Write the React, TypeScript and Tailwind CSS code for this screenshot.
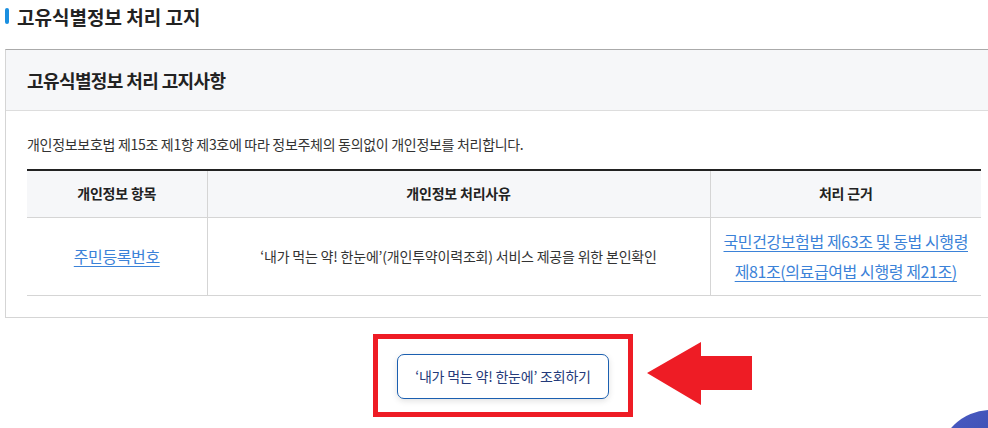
export default function App() {
  return (
    <div className="relative w-[988px] h-[428px] overflow-hidden bg-white font-['Noto_Sans_CJK_KR','Noto_Sans',sans-serif] text-[#222]">
      {/* Title */}
      <div className="flex items-center h-[32px] pl-[5px]">
        <span className="w-[4px] h-[16px] rounded-full bg-[#1a8fe0]" />
        <h2 className="ml-[8px] text-[19px] font-bold leading-none">고유식별정보 처리 고지</h2>
      </div>

      {/* Notice box */}
      <div className="mt-[17px] ml-[5px] w-[1000px] border border-[#d5d5d5] border-t-[#aaaaaa]">
        <div className="flex items-center h-[61px] bg-[#f6f7f9] border-b border-[#dddddd] pl-[21px]">
          <h3 className="text-[18px] font-bold tracking-[-0.6px]">고유식별정보 처리 고지사항</h3>
        </div>
        <div className="pl-[21px] pt-[23px] pb-[21px]">
          <p className="text-[14px] text-[#333] tracking-[-0.3px] leading-[20px]">
            개인정보보호법 제15조 제1항 제3호에 따라 정보주체의 동의없이 개인정보를 처리합니다.
          </p>
          <table className="mt-[15px] w-[954px] border-collapse border-t-2 border-t-[#222] text-center">
            <thead>
              <tr className="h-[47px] bg-[#f6f7f9] border-b border-[#d5d5d5]">
                <th className="w-[180px] text-[14px] font-bold tracking-[-0.2px]">개인정보 항목</th>
                <th className="w-[503px] border-l border-[#d5d5d5] text-[14px] font-bold tracking-[-0.2px]">개인정보 처리사유</th>
                <th className="border-l border-[#d5d5d5] text-[14px] font-bold tracking-[-0.2px]">처리 근거</th>
              </tr>
            </thead>
            <tbody>
              <tr className="h-[78px] border-b border-[#d5d5d5]">
                <td>
                  <a className="text-[16px] text-[#3b82d8] underline underline-offset-[3px] tracking-[-0.4px]">주민등록번호</a>
                </td>
                <td className="border-l border-[#d5d5d5] text-[14px] text-[#333] tracking-[-0.2px]">
                  ‘내가 먹는 약! 한눈에’(개인투약이력조회) 서비스 제공을 위한 본인확인
                </td>
                <td className="border-l border-[#d5d5d5]">
                  <a className="text-[16px] leading-[30px] text-[#3b82d8] underline underline-offset-[3px] tracking-[-0.4px]">
                    국민건강보험법 제63조 및 동법 시행령
                    <br />
                    제81조(의료급여법 시행령 제21조)
                  </a>
                </td>
              </tr>
            </tbody>
          </table>
        </div>
      </div>

      {/* Button with annotation */}
      <div className="flex items-center mt-[16px]">
        <div className="ml-[373px] w-[260px] h-[83px] border-[5px] border-[#ee1c25] flex items-center justify-center">
          <button className="w-[212px] h-[45px] mt-[2px] rounded-[7px] border border-[#1b5fb0] bg-white shadow-[0_2px_6px_rgba(0,0,0,0.12)] text-[14px] text-[#243a7a] tracking-[-0.2px]">
            ‘내가 먹는 약! 한눈에’ 조회하기
          </button>
        </div>
        <svg className="ml-[14px]" width="106" height="66" viewBox="0 0 106 66">
          <polygon points="0,31 54,0 54,14 105,14 105,48 54,48 54,63" fill="#ee1c25" />
        </svg>
      </div>

      {/* Floating circle */}
      <div className="absolute left-[939px] top-[410px] w-[102px] h-[102px] rounded-full bg-gradient-to-br from-[#4a5cc4] to-[#2f3f9e]" />
    </div>
  );
}
